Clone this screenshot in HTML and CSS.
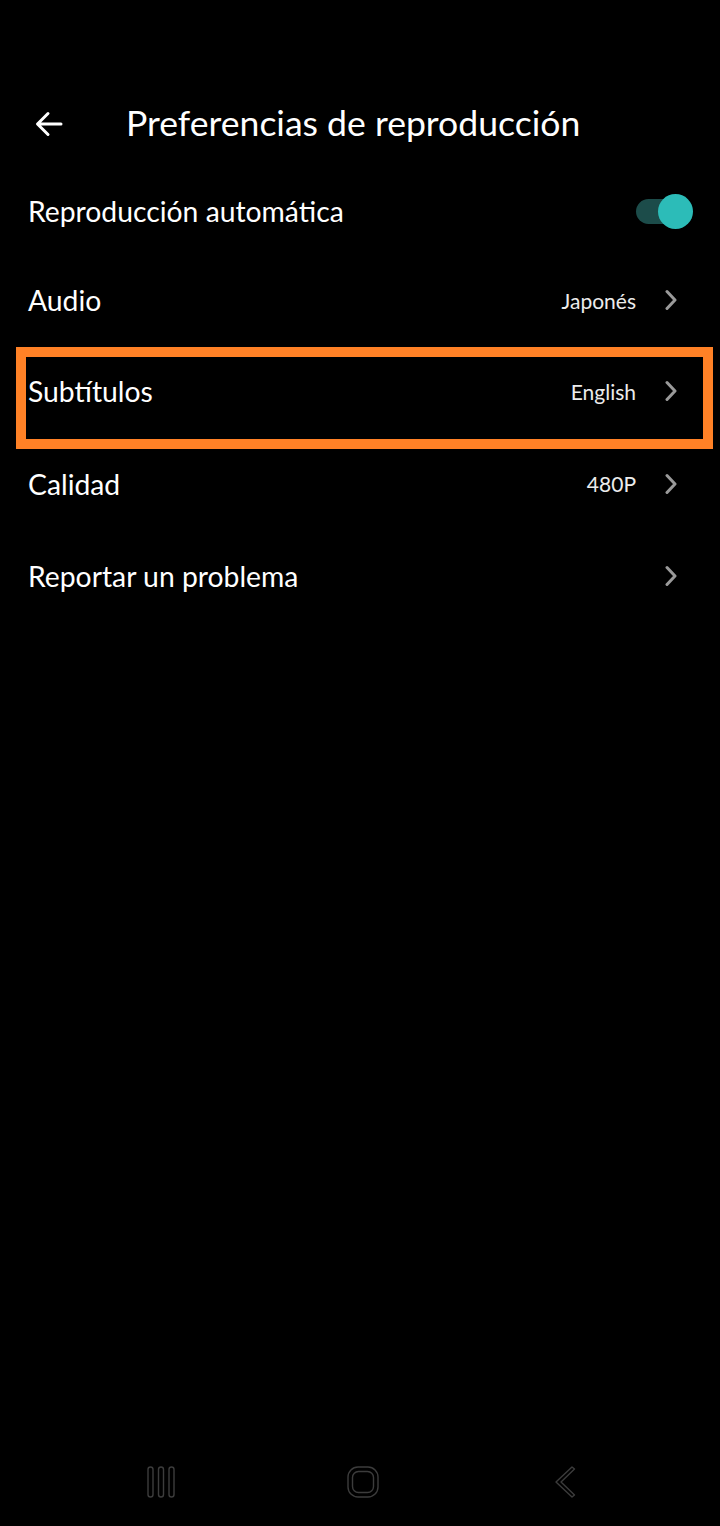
FILE: index.html
```html
<!DOCTYPE html>
<html lang="es">
<head>
<meta charset="utf-8">
<title>Preferencias de reproducción</title>
<link rel="stylesheet" href="styles.css">
</head>
<body>
<div class="screen">
  <header class="header">
    <span class="back">
      <svg width="28" height="26" viewBox="0 0 28 26"><path d="M26 13H3M13 2.5L2.5 13L13 23.5" fill="none" stroke="#fff" stroke-width="3" stroke-linecap="round" stroke-linejoin="round"/></svg>
    </span>
    <h1 class="title">Preferencias de reproducción</h1>
  </header>

  <main class="list">
    <div class="row row-toggle">
      <span class="label">Reproducción automática</span>
      <span class="toggle"><span class="track"></span><span class="knob"></span></span>
    </div>
    <div class="row row-audio">
      <span class="label">Audio</span>
      <span class="value">Japonés</span>
      <svg class="chev" width="12" height="22" viewBox="0 0 12 22"><path d="M2 2.5L10 11L2 19.5" fill="none" stroke="#9a9a9a" stroke-width="3" stroke-linecap="round" stroke-linejoin="round"/></svg>
    </div>
    <div class="row row-highlight">
      <span class="label">Subtítulos</span>
      <span class="value">English</span>
      <svg class="chev" width="12" height="22" viewBox="0 0 12 22"><path d="M2 2.5L10 11L2 19.5" fill="none" stroke="#9a9a9a" stroke-width="3" stroke-linecap="round" stroke-linejoin="round"/></svg>
      <span class="highlight"></span>
    </div>
    <div class="row">
      <span class="label">Calidad</span>
      <span class="value">480P</span>
      <svg class="chev" width="12" height="22" viewBox="0 0 12 22"><path d="M2 2.5L10 11L2 19.5" fill="none" stroke="#9a9a9a" stroke-width="3" stroke-linecap="round" stroke-linejoin="round"/></svg>
    </div>
    <div class="row">
      <span class="label">Reportar un problema</span>
      <svg class="chev" width="12" height="22" viewBox="0 0 12 22"><path d="M2 2.5L10 11L2 19.5" fill="none" stroke="#9a9a9a" stroke-width="3" stroke-linecap="round" stroke-linejoin="round"/></svg>
    </div>
  </main>

  <nav class="navbar">
    <span class="nav-item">
      <svg width="30" height="34" viewBox="0 0 30 34">
        <rect x="2" y="2" width="5" height="30" rx="2.5" fill="none" stroke="#3c3c3c" stroke-width="1.4"/>
        <rect x="12.5" y="2" width="5" height="30" rx="2.5" fill="none" stroke="#3c3c3c" stroke-width="1.4"/>
        <rect x="23" y="2" width="5" height="30" rx="2.5" fill="none" stroke="#3c3c3c" stroke-width="1.4"/>
      </svg>
    </span>
    <span class="nav-item nav-home">
      <svg width="34" height="34" viewBox="0 0 34 34">
        <rect x="2" y="2" width="30" height="30" rx="10" fill="none" stroke="#3c3c3c" stroke-width="1.4"/>
        <rect x="6.5" y="6.5" width="21" height="21" rx="6" fill="none" stroke="#3c3c3c" stroke-width="1.4"/>
      </svg>
    </span>
    <span class="nav-item">
      <svg width="26" height="34" viewBox="0 0 26 34">
        <path d="M20 2L4 17L20 32L22.5 30L9 17L22.5 4Z" fill="none" stroke="#3c3c3c" stroke-width="1.4" stroke-linejoin="round"/>
      </svg>
    </span>
  </nav>
</div>
</body>
</html>
```

FILE: styles.css
```css
* { box-sizing: border-box; }

html, body {
  margin: 0;
  padding: 0;
  background: #000;
}

body {
  font-family: "Lato", "Noto Sans", sans-serif;
  color: #fff;
}

.screen {
  width: 720px;
  height: 1526px;
  display: flex;
  flex-direction: column;
  padding-top: 80px;
}

.header {
  height: 88px;
  display: flex;
  align-items: center;
  padding-left: 35px;
}

.back {
  display: flex;
  width: 28px;
  height: 26px;
}

.title {
  margin: -3px 0 0 63px;
  font-size: 35.6px;
  font-weight: 400;
  line-height: 1;
  color: #fff;
}

.list {
  display: flex;
  flex-direction: column;
}

.row {
  position: relative;
  height: 92.5px;
  flex: none;
  display: flex;
  align-items: center;
  padding: 0 43px 0 28px;
}

.row-toggle {
  height: 87px;
  padding-right: 27px;
}

.row-audio {
  height: 90px;
}

.label {
  flex: 1;
  font-size: 28.3px;
  line-height: 1;
  color: #fff;
}

.value {
  font-size: 21px;
  line-height: 1;
  color: #ececec;
  margin-right: 29px;
}

.chev {
  display: block;
  flex: none;
}

.toggle {
  position: relative;
  width: 57px;
  height: 35px;
  flex: none;
}

.track {
  position: absolute;
  left: 0;
  top: 5px;
  width: 52px;
  height: 25px;
  border-radius: 13px;
  background: #1c4c4a;
}

.knob {
  position: absolute;
  right: 0;
  top: 0;
  width: 35px;
  height: 35px;
  border-radius: 50%;
  background: #2cbcb8;
}

.highlight {
  position: absolute;
  left: 16px;
  top: 2px;
  width: 697px;
  height: 102px;
  border: 10px solid #ff8126;
  pointer-events: none;
}

.navbar {
  margin-top: auto;
  height: 86px;
  display: flex;
  justify-content: center;
  align-items: center;
  gap: 162px;
  padding-left: 5px;
  padding-bottom: 2px;
}

.nav-item {
  width: 40px;
  display: flex;
  justify-content: center;
}
```
